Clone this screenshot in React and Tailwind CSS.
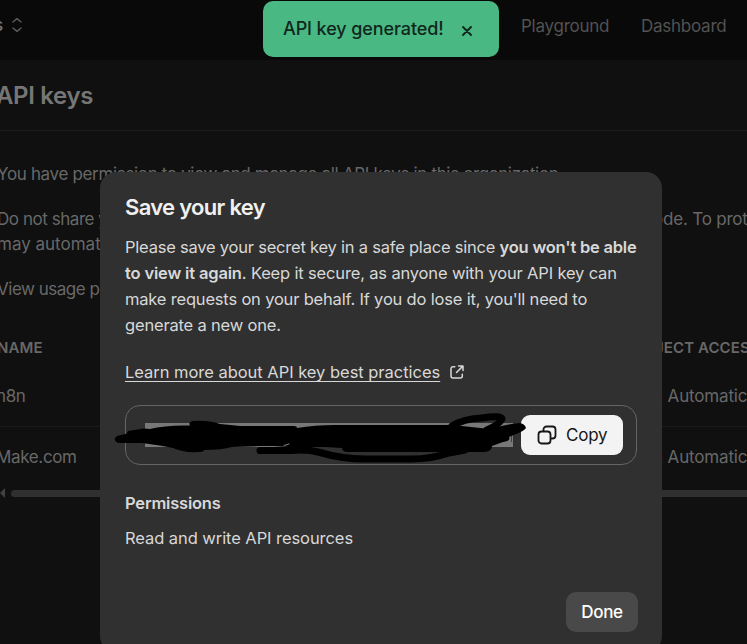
import React from "react";

function NavBar() {
  return (
    <header className="flex h-[60px] w-full shrink-0 items-start bg-[#090909] text-[17px] leading-[26px] text-[#525252]">
      <div className="mt-[12px] -ml-[6px] flex items-center">
        <span className="font-medium text-[#777]">s</span>
        <svg className="ml-[8px] h-[16px] w-[12px]" viewBox="0 0 12 16" fill="none" stroke="#5a5a5a" strokeWidth="1.5" strokeLinecap="round" strokeLinejoin="round">
          <path d="M2 5 6 1.700l4 3.300M2 11l4 3.300 4-3.300" />
        </svg>
      </div>
      <nav className="mt-[13px] mr-[20px] ml-auto flex gap-8 whitespace-nowrap">
        <span className="w-[88px] tracking-[-0.25px]">Playground</span>
        <span className="w-[86px] tracking-[-0.25px]">Dashboard</span>
      </nav>
    </header>
  );
}

function TableRow({ name, access, className }) {
  return (
    <div className={"flex justify-between " + className}>
      <span className="tracking-[-0.35px]">{name}</span>
      <span className="w-[80px] shrink-0 tracking-[-0.15px]">
        <span className="-ml-[14px]">n</span> {access}
      </span>
    </div>
  );
}

function KeysPage() {
  return (
    <main className="text-[17px] leading-[25px] whitespace-nowrap text-[#686868]">
      <div className="flex h-[71px] items-center border-b border-[#1b1b1b]">
        <h1 className="-ml-[4px] text-[24px] font-semibold tracking-[-0.35px] text-[#767676]">API keys</h1>
      </div>
      <div className="-ml-[3px] flex flex-col gap-5 pt-[31px]">
        <p className="tracking-[-0.34px]">You have permission to view and manage all API keys in this organization.</p>
        <div>
          <p className="flex justify-between tracking-[-0.45px]">
            <span>Do not share your API key with others</span>
            <span className="w-[94px] shrink-0 tracking-[-0.2px]">ode. To protect</span>
          </p>
          <p className="tracking-[0px]">may automatically disable</p>
        </div>
        <p className="tracking-[-0.48px]">View usage per API key</p>
      </div>
      <div className="mt-[33px] -ml-[3px] flex justify-between text-[15px] font-semibold tracking-[0.1px]">
        <span>NAME</span>
        <span className="w-[92px]">JECT ACCESS</span>
      </div>
      <TableRow name="n8n" access="Automatic" className="-ml-[4px] mt-[24px] h-[43px] border-b border-[#1a1a1a]" />
      <TableRow name="Make.com" access="Automatic" className="-ml-[4px] mt-[18px]" />
      <div className="mt-[18px] flex items-center">
        <svg className="h-[10px] w-[5px]" viewBox="0 0 5 10" fill="#414141">
          <path d="M5 0v10L0 5z" />
        </svg>
        <div className="ml-[6px] h-[7px] flex-1 rounded-l-full bg-[#303030]" />
      </div>
    </main>
  );
}

function Toast() {
  return (
    <div className="absolute top-[1px] left-[263px] flex h-[56px] w-[236px] items-center rounded-[10px] bg-[#4ab883] pl-[20px] text-[#10271c]">
      <span className="-mt-[2px] w-[179px] text-[18px] font-medium tracking-[-0.1px] whitespace-nowrap">API key generated!</span>
      <svg className="mt-[4px] h-[10px] w-[10px]" viewBox="0 0 10 10" fill="none" stroke="currentColor" strokeWidth="1.9" strokeLinecap="round">
        <path d="m1 1 8 8M9 1 1 9" />
      </svg>
    </div>
  );
}

function Scribble() {
  return (
    <svg className="absolute -top-[6px] -left-[26px] h-[84px] w-[440px]" viewBox="100 400 440 84" fill="none" stroke="#000" strokeLinecap="round" strokeLinejoin="round">
      <path fill="#000" stroke="none" d="M117 436 127 433.5Q127 430.5 131 430.5L144 428.500 150 429Q165 425 190 425.500Q188 422 193 421Q208 420 220 424L240 426H294Q297 426 297 428Q315 425 335 425H452L490 429Q501 426 512 424L520 423Q525 424 526 428Q524 431 516 434L509 437Q511 441 503 442L492 446Q492 451 485 452H348Q342 452 342 448L325 447 312 447H289L274 446H260L232 447Q222 450 204 450Q204 452 198 452Q184 453 173 448Q165 446 142 443H118Q112 440 117 436Z" />
      <path strokeWidth="7" d="M260 450.500H291Q307 449 318 452Q342 459 365 459H412Q431 459 449 453L465 450" />
      <path strokeWidth="7" d="M452 426Q463 419 481 418Q502 415 502 419Q500 424 487 430" />
      <path d="M284 445.500 289 444" stroke="#878787" strokeWidth="1" />
    </svg>
  );
}

function KeyField() {
  return (
    <div className="relative mt-[20px] flex h-[60px] w-[512px] items-center justify-between rounded-[15px] border border-[#656565] pr-[13px] pl-[19px]">
      <div className="mt-[-1px] flex h-[24px] w-[368px] items-end justify-end bg-[#787878]">
        <span className="mr-[1px] mb-[5px] h-[6px] w-px bg-[#404040]" />
      </div>
      <button className="flex h-[40px] w-[102px] items-center rounded-[9px] bg-[#f3f3f3] pl-[16px] text-[17px] tracking-[-0.2px] text-[#171717]">
        <svg className="mr-[9px] h-[20px] w-[20px]" viewBox="0 0 20 20" fill="none" stroke="currentColor" strokeWidth="1.8" strokeLinejoin="round">
          <rect x="1.500" y="6.500" width="12" height="12" rx="3" />
          <path d="M6.500 6.500V4.500A3 3 0 0 1 9.500 1.500h6A3 3 0 0 1 18.500 4.500v6a3 3 0 0 1-3 3h-2" />
        </svg>
        Copy
      </button>
      <Scribble />
    </div>
  );
}

function SaveKeyDialog() {
  return (
    <section className="absolute top-[172px] left-[100px] flex h-[480px] w-[562px] flex-col rounded-[16px] bg-[#303030] px-[25px] pt-[22px] text-[16.5px] leading-[26px] whitespace-nowrap text-[#d8d8d8]">
      <h2 className="text-[22px] font-semibold tracking-[-0.68px] text-[#f0f0f0]">Save your key</h2>
      <div className="mt-[14px]">
        <p className="tracking-[-0.22px]">Please save your secret key in a safe place since <b className="font-semibold">you won't be able</b></p>
        <p className="tracking-[-0.16px]"><b className="font-semibold">to view it again</b>. Keep it secure, as anyone with your API key can</p>
        <p className="tracking-[-0.185px]">make requests on your behalf. If you do lose it, you'll need to</p>
        <p className="tracking-[-0.18px]">generate a new one.</p>
      </div>
      <div className="mt-[21px] flex items-center">
        <a className="w-[315px] tracking-[-0.03px] underline decoration-1 underline-offset-[3px]">Learn more about API key best practices</a>
        <svg className="ml-[10px] h-[14px] w-[14px]" viewBox="0 0 14 14" fill="none" stroke="currentColor" strokeWidth="1.5" strokeLinecap="round" strokeLinejoin="round">
          <path d="M4.800 1.700H3a2 2 0 0 0-2 2V11a2 2 0 0 0 2 2h7.300a2 2 0 0 0 2-2V9.200M8.500 1H13v4.500M12.600 1.400 6.500 7.500" />
        </svg>
      </div>
      <KeyField />
      <h3 className="mt-[25px] font-semibold tracking-[-0.2px]">Permissions</h3>
      <p className="mt-[9px] tracking-[-0.07px]">Read and write API resources</p>
      <button className="mt-[41px] -mr-px h-[40px] w-[72px] self-end rounded-[10px] bg-[#494949] text-[17px] font-medium tracking-[-0.3px] text-white">Done</button>
    </section>
  );
}

export default function App() {
  return (
    <div className="relative flex h-[644px] w-[747px] flex-col overflow-hidden bg-[#101010] font-['Inter',sans-serif]">
      <NavBar />
      <KeysPage />
      <SaveKeyDialog />
      <Toast />
    </div>
  );
}
